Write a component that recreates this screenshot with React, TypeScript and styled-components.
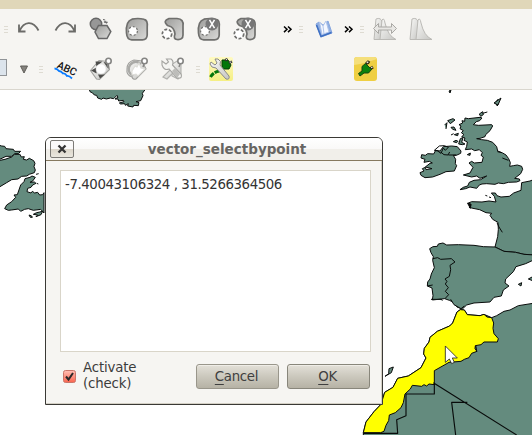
import React from "react";
import styled, { createGlobalStyle, css } from "styled-components";

const GlobalStyle = createGlobalStyle`
  html, body { margin: 0; padding: 0; overflow: hidden; }
  body { font-family: "DejaVu Sans", sans-serif; font-size: 13.33px; color: #3c3c3c; }
  *, *::before, *::after { box-sizing: border-box; }
`;

const Screen = styled.div`
  position: relative;
  display: flex;
  flex-direction: column;
  width: 532px;
  height: 435px;
  overflow: hidden;
  background: #fff;
`;

const TopStrip = styled.div`
  flex: none;
  height: 9px;
  background: #e0d7b9;
`;

const Toolbars = styled.header`
  flex: none;
  height: 81px;
  background: #f6f5f2;
  border-bottom: 1px solid #d9d6ce;
`;

const ToolRow = styled.div`
  display: flex;
  align-items: center;
  height: 40px;
`;

const Tool = styled.span<{ $gap?: number; $w?: number }>`
  flex: none;
  display: flex;
  width: ${(p) => p.$w ?? 24}px;
  height: 24px;
  margin-left: ${(p) => p.$gap ?? 12}px;
  svg { display: block; overflow: visible; }
`;

const Grip = styled.span<{ $gap: number }>`
  flex: none;
  width: 4px;
  height: 7px;
  margin-left: ${(p) => p.$gap}px;
  background: repeating-linear-gradient(#dedbd2 0 1px, transparent 1px 3px);
`;

const Combo = styled.span`
  flex: none;
  width: 7px;
  height: 17px;
  margin-top: -3px;
  background: #dce4ec;
  border: 1px solid #909498;
  border-width: 1px 1px 1px 0;
`;

const Canvas = styled.main`
  flex: 1;
  svg { display: block; }
`;

const Dialog = styled.section`
  position: absolute;
  left: 45px;
  top: 137px;
  display: flex;
  flex-direction: column;
  width: 338px;
  height: 268px;
  background: #f6f5f2;
  border: 1px solid #3a3935;
  border-radius: 6px 6px 0 0;
  box-shadow: inset -1px -1px #d4d0c5;
  overflow: hidden;
`;

const TitleBar = styled.div`
  flex: none;
  display: flex;
  align-items: center;
  height: 23px;
  padding-left: 4px;
  background: linear-gradient(#fff 0, #faf9f8 48%, #f1efea 52%, #f1efea 100%);
  border-bottom: 1px solid #86795f;
`;

const CloseButton = styled.button`
  display: grid;
  place-items: center;
  width: 24px;
  height: 18px;
  padding: 0;
  border: 1px solid #7d7b77;
  border-radius: 2px;
  background: linear-gradient(#fbfafa 0 50%, #dcd6ca 51%, #eae7df);
`;

const Title = styled.h1`
  flex: 1;
  margin: 0 0 0 2px;
  padding-right: 4px;
  text-align: center;
  font-size: 13.5px;
  line-height: 18px;
  color: #666562;
`;

const Readout = styled.div`
  flex: none;
  width: 311px;
  height: 182px;
  margin: 9px 0 0 14px;
  padding: 6px 4px;
  border: 1px solid #d9d5c9;
  background: #fff;
  line-height: 16px;
  letter-spacing: -0.42px;
  white-space: nowrap;
  color: #333;
`;

const Footer = styled.div`
  display: flex;
  align-items: center;
  height: 48px;
  padding-left: 17px;
`;

const CheckLabel = styled.label`
  display: flex;
  align-items: center;
  width: 133px;
  gap: 7px;
  line-height: 16px;
  letter-spacing: -0.15px;
`;

const CheckMark = styled.span`
  display: block;
  width: 13px;
  height: 13px;
  svg { display: block; overflow: visible; }
`;

const PushButton = styled.button<{ $focus?: boolean }>`
  width: 83px;
  height: 25px;
  padding: 0 2px 1px 0;
  margin: 1px 8px 0 0;
  border: 1px solid #99968b;
  border-radius: 3px;
  background: linear-gradient(#e3e0d8, #cbc8bd 50%, #b6b2a5);
  box-shadow: inset 0 1px #efede7;
  font: 13.33px "DejaVu Sans", sans-serif;
  letter-spacing: -0.3px;
  color: #3f3f3f;
  ${(p) => p.$focus && css`border-color: #88867b;`}
  u { text-underline-offset: 3px; text-decoration-thickness: 1px; }
`;

const Chevrons = () => (
  <svg width="10" height="24" fill="none" stroke="#000" strokeWidth="1.5">
    <path d="M1 9.5l3 2.8-3 2.8M5 9.5l3 2.8-3 2.8" />
  </svg>
);

const Arrow = ({ flip = false }: { flip?: boolean }) => (
  <svg width="24" height="24" fill="none" stroke="#6b6b68" strokeWidth="1.8">
    <path transform={flip ? "translate(24) scale(-1 1)" : undefined}
      d="M2 7.5v7h6.5M2.3 14.2C7 4 16 3 21.5 13.5" />
  </svg>
);

const Blob = ({ kind, cross = false }: { kind: "ring" | "part"; cross?: boolean }) => (
  <svg width="24" height="24" stroke="#6f6f6d" strokeWidth="1.7">
    {kind === "ring" ? (
      <>
        <path fill="url(#gray)" d="M7 2.2Q13 .8 19 2.3Q23 3 22.2 10V18Q22 23 17 22.8H7Q2 23 1.5 16Q.5 4 7 2.2Z" />
        <circle cx="8" cy="14" r="4.4" fill="#fff" strokeWidth="1.2" strokeDasharray="2 2" />
      </>
    ) : (
      <>
        <path fill="url(#gray)" d="M6 8Q1.5 4 8 1.5H16Q23 2 22 9V18Q22 23 16 22.5Q12 22 14 17Q13 10 8 9Q7 9 6 8Z" />
        <circle cx="6" cy="17" r="4.7" fill="#fff" strokeDasharray="3 1.7" />
      </>
    )}
    {cross && (
      <>
        <circle cx="15" cy="7" r="6.5" fill="#777" stroke="none" />
        <path d="M12.5 2.8l5 8.4M17.5 2.8l-5 8.4" stroke="#fff" strokeWidth="1.5" />
      </>
    )}
  </svg>
);

const Simplify = () => (
  <svg width="24" height="24" stroke="#666" strokeWidth="1.5">
    <circle cx="7" cy="7" r="5.7" fill="#979797" />
    <path fill="url(#gray)" d="M9.5 8.5h8.5l3.8 6-3.8 7H9.5L6 15z" />
    <path fill="none" strokeWidth="1.1" strokeDasharray="2 1" d="M14 2.5Q17 2.5 17 6M15 4.5l2 2 2-2" />
  </svg>
);

const Tag = ({ kind }: { kind: "move" | "turn" | "edit" }) => (
  <svg width="24" height="24" stroke="#858583" strokeWidth="1.1">
    {kind === "move" && (
      <>
        <path fill="url(#pale)" stroke="#a0a09d" d="M1.5 13.5L10 3.5l9 1 1.5 8-10 10-3-.5z" />
        <g fill="#4d4d4b" stroke="none">
          <path d="M6.5 4.5h7l-6 5zM14.5 5l5 1v6zM2 13.5l5.5-3v6zM9 17.5h7l-5 4z" />
        </g>
        <circle cx="12" cy="12" r="5" fill="#fff" stroke="#ddd" strokeWidth=".5" />
      </>
    )}
    {kind === "turn" && (
      <>
        <path fill="url(#pale)" stroke="#a0a09d" d="M2 12Q2 5 9 3l8 1 4 8-10 10Q8 23 7 20Q1 18 2 12z" />
        <path fill="none" strokeWidth="2.4" stroke="#aaaaa7" d="M8 19Q1 14 5 8Q10 2 16 7" />
        <path fill="#fff" stroke="#deded9" d="M7 14l3-5 2 1 2-4 2 5 4 1-7 7-2-2-4 1z" />
      </>
    )}
    {kind === "edit" && (
      <>
        <path fill="url(#pale)" stroke="#b2b2af" d="M10 8l6-4 4 1v13l-3 4-6-3z" />
        <path fill="url(#pale)" stroke="#b2b2af" d="M2 20l9-9 3 3-8 8z" />
        <path fill="#f4f4f1" stroke="#a4a4a1" d="M1 8V4l4 3 2.5-2-2-3H10q3 2 1.5 6L20 17q2 5-4 4L8 12q-5 2-7-4z" />
        <path fill="#bdbdba" stroke="none" d="M11 14l3-3 5 6-3 4z" />
      </>
    )}
    <circle cx="19.5" cy="4" r="2.7" fill="#fff" strokeWidth="1.6" />
    <path d="M19 7l-1 3" strokeWidth="1.4" />
  </svg>
);

const AbcText = styled.text`
  font: 500 10.5px Roboto, sans-serif;
  fill: #161616;
`;

const Abc = () => (
  <svg width="24" height="24">
    <AbcText transform="translate(2.2 10.5) rotate(25)">ABC</AbcText>
    <path d="M.5 11.5Q3 11.5 5 14Q7 14 9 16.5Q11 16 13 19Q15 18.5 18 21.5" fill="none" stroke="#087bff" strokeWidth="1.8" />
  </svg>
);

const PluginWrench = () => (
  <svg width="24" height="24">
    <rect width="24" height="24" rx="2" fill="url(#lemon)" />
    <path d="M1.5 20q3-5 9-6" fill="none" stroke="#04770a" strokeWidth="3" strokeDasharray="5 1" />
    <path d="M13 3h6l3 5-2 4h-7z" fill="#04770a" stroke="#073c08" />
    <path d="M16.5 4l1.5-2.5M20 6l3-1.5" stroke="#333" strokeWidth="2.4" />
    <path d="M17 3l.8-1M20.8 5.5l1.4-.7" stroke="#eee" />
    <path d="M1 7l1-2 4 3 2-2-2-4h3q4 2 2 6l9 11q1 4-3 3L7 11Q2 11 1 7z" fill="url(#pale)" stroke="#8b8b87" />
  </svg>
);

const PluginYellow = () => (
  <svg width="23" height="24">
    <rect width="23" height="24" rx="3" fill="#efcf43" />
    <path d="M0 8Q9 7 23 2V3Q23 0 20 0H3Q0 0 0 3Z" fill="#f5df7b" />
    <path d="M12 7l2-2 1.5 1M16 12l3-2" fill="none" stroke="#312c12" strokeWidth="2.8" />
    <path d="M4.5 16.5L8 14V9.5L11.5 6.5l6 6-3 3.5-4.5 0-4 3z" fill="#0b830d" stroke="#164611" />
    <path d="M12.8 5.8l1.5-1M17.2 10.8l1.2-.8" stroke="#f6f6ea" strokeWidth="1.3" />
  </svg>
);

const MapBook = () => (
  <svg width="18" height="24">
    <path d="M1 7l3-2 4 3 5-4 4 12-11 4z" fill="#8faee1" stroke="#86a6df" />
    <path d="M4.5 5l3.5 4 3-5 3 11-7 2.5z" fill="#f4f7ff" stroke="#b1c5eb" />
    <path d="M1.5 8L6 19.5l10.5-4" fill="none" stroke="#3f70c3" strokeWidth="1.6" />
    <path d="M8 9l1 8" stroke="#b1c5eb" />
  </svg>
);

const Histogram = ({ arrows = false }: { arrows?: boolean }) => (
  <svg width="24" height="24" fill="url(#pale)" stroke="#bbbab6">
    <path d="M1 22.5L3 2q5-2 6 3l1 17.5z" />
    <path d="M7 22.5L9 3q2-3 3 3Q15 19 23 22.5z" />
    {arrows && <path d="M.5 11.5l5-5v3.5h13V6.5l5 5-5 5v-3.5h-13v3.5z" fill="#e8e7e4" stroke="#aaa9a5" />}
  </svg>
);

const LAND = "#648b7e";

const WorldMap = () => (
  <svg width="532" height="345" viewBox="0 90 532 345" fill={LAND} stroke="#080b0a" strokeWidth="3" strokeLinejoin="round">
    <g transform="translate(0 80) scale(.33333)">
      <path d="M268 28l2 7 8 4 5 6 7 1 3 8 12 4 4-4 10 3 12-3 10 2 10-10 3 6-9 5 9 0 2 6 14-2 2 4-14 4 4 3 12-1 2 5 9-5-2 7 16 3 2-5 14 1 2-9-9-3 14-3 7-15-2-7 9-12z" />
      <path d="M-5 195L5 198 14 199 18 206 40 208 44 214 62 214 55 221 45 221 35 229 18 229-5 240Z" />
      <path d="M-5 242L15 238 35 231 43 223 60 223 64 231 73 230 70 238 80 240 88 235 101 242 105 250 102 260 106 270 103 278 88 283 80 288 65 289 54 297 35 299 20 308-5 323Z" />
      <path d="M14 386L20 375 35 365 47 352 42 345 52 344 62 315 72 305 75 296 90 292 96 288 106 292 98 303 90 307 103 306 108 310 98 315 93 322 83 325 81 335 93 339 97 334 104 339 113 337 119 345 128 344 132 338V399L122 388 100 391 85 386 74 388 62 394 55 387 35 390 25 391Z" />
      <path d="M87 405l8 3 2 4-6 0zM100 403q7-5 19-7l9-2-5 10-15 6 5-5zM108 283l8-2M110 310l5 2" />
    </g>
    <g transform="translate(400 100) scale(.33333)">
      <path d="M195 54L205 56 240 52 246 54 239 62 229 65 220 74 235 76 275 74 278 78 270 92 257 104 255 110 240 115 230 116 245 119 262 121 278 127 290 140 293 153 308 159 318 165 326 176 331 188 329 199 340 197 352 195 365 199 368 208 362 221 344 235 358 237 360 242 350 246 325 247 310 251 295 249 285 253 260 251 246 252 238 255 230 265 210 261 197 266 180 269 190 262 203 258 208 247 222 241 242 239 260 228 240 235 230 228 215 231 190 225 210 219 219 202 207 189 215 184 223 189 246 187 250 171 243 166 247 158 238 149 224 152 215 147 196 149 200 139 202 126 192 121 195 114 185 110 192 104 184 98 190 92 180 86 183 78 177 74 188 69 186 62 194 64Z" />
      <path d="M65 164L76 166 83 161 101 162 107 151 120 153 130 140 155 138 172 140 183 153 182 160 169 166 160 166 167 178 166 191 170 197 163 213 138 215 120 223 98 231 75 233 63 226 60 218 72 213 67 206 76 202 78 209 96 206 84 203 76 201 90 190 97 189 88 184 72 187 75 178 63 174Z" />
      <path d="M103 151l15-13 15-1 12 5-9 9-6-7-7 16-10-7zM122 156l10 8 12 1 5-9M145 165h24" fill="none" />
      <path d="M143 62l16-6 6 4-14 11zM134 75l7-7-3 19M153 82l9-1 6 10-10-3zM153 105l8-4M163 104l12-4-2 7zM160 125l8-4 6 3-4 4zM176 132l5-16 8-3-4 14 10 5-8 2zM202 164l9-5-1 7zM238 42l10-7 2 9-8 5zM286 8l8-10 3 5-5 15zM248 40l14-4M256 286l6 2M267 291l6 2" />
      <path d="M292 155l14 3M307 174l18 7" fill="none" />
    </g>
    <g transform="translate(400 200) scale(.33333)">
      <path d="M405-63L390-57 365-52 363-29 341-21 328-11 303-9 291-13 286-21 274-21 283-11 288 6 267 3 246 6 215 5 203 10 213 13 211 20 207 22 219 25 239 29 258 38 275 40 270 46 278 58 294 67 295 88 293 110 285 141 312 154 347 157 372 163 405 165Z" />
      <path d="M405 178L377 191 348 200 340 215 317 237 315 249 327 258 310 270 304 288 282 292 270 306 222 309 200 315 187 327 171 321 161 307 148 301 134 296 97 300 99 287 96 264 82 258 83 246 90 237 94 222 103 203 98 181 100 170 93 158 89 146 99 140 112 139 115 132 129 129 140 135 175 134 222 136 250 140 285 141 312 154 347 157 372 163 405 165Z" />
      <path d="M98 176L113 173 122 178 154 176 165 186 150 196 152 209 148 229 135 237 141 244 136 252 145 263 136 274 146 284 135 296M291 68l6 13 10 16M82 258l16-3" fill="none" />
      <path d="M385 237l15-8v14zM355 253l10-5-2 10z" />
      <path d="M203 10l10 3-2 12z" fill="#080b0a" />
    </g>
    <g transform="translate(350 300) scale(.33333)">
      <path d="M555 9L505 17 480 30 462 34 440 47 425 53 402 43 390 47 352 44 343 30 331 29 321 36 308 69 299 78 262 94 240 112 237 126 223 145 221 162 228 174 213 203 175 228 143 235 129 262 104 277 93 313 72 335 48 366 40 398V415H560Z" />
      <path fill="#ffff00" d="M331 29L343 30 352 44 390 47 402 43 411 51 425 53 431 69 429 85 432 101 445 116 442 126 402 126 393 134 376 137 375 146 381 154 365 160 357 173 343 178 333 184 297 187 285 194 253 212V254L237 252 230 258 222 254 215 259 187 256 181 267 165 282 160 308 153 323 136 338 118 345 116 362 108 376 102 394 92 398 40 398 48 366 72 335 93 313 104 277 129 262 143 235 175 228 213 203 228 174 221 162 223 145 237 126 240 112 262 94 299 78 308 69 321 36Z" />
      <path d="M250 248L500 405M253 250v32h-85v65l-28 12 3 41H40M352 307h-47l12 98M377 137l3 17" fill="none" strokeWidth="3.4" />
      <path d="M105 229l11-8 1-15 13-5-6 17zM243-2h30l5 3M302-2l10 16 21 12 10-8" />
      <path d="M286 138v49l12-10 7 14 8-4-6-13h15z" fill="#fff" stroke="#222" strokeWidth="2.5" />
    </g>
    <path d="M449 91l2-1-1 3zM494 103l7-5-3 7-2-1z" strokeWidth="1" />
  </svg>
);

const Defs = () => (
  <defs>
    <linearGradient id="gray" x2="1" y2="1"><stop stopColor="#9d9d9b" /><stop offset="1" stopColor="#dadad8" /></linearGradient>
    <linearGradient id="pale" x2="1" y2="1"><stop stopColor="#fafaf8" /><stop offset="1" stopColor="#c5c5c2" /></linearGradient>
    <linearGradient id="lemon" x2="0" y2="1"><stop stopColor="#fffac1" /><stop offset="1" stopColor="#f5ef84" /></linearGradient>
    <linearGradient id="red" x2="0" y2="1"><stop stopColor="#ffc0b5" /><stop offset="1" stopColor="#fa634d" /></linearGradient>
  </defs>
);

const DefsHolder = styled.svg`
  position: absolute;
  width: 0;
  height: 0;
`;

export default function App() {
  return (
    <Screen>
      <GlobalStyle />
      <DefsHolder><Defs /></DefsHolder>
      <TopStrip />
      <Toolbars>
        <ToolRow>
          <Grip $gap={4} />
          <Tool $gap={9}><Arrow /></Tool>
          <Tool><Arrow flip /></Tool>
          <Tool><Simplify /></Tool>
          <Tool><Blob kind="ring" /></Tool>
          <Tool><Blob kind="part" /></Tool>
          <Tool><Blob kind="ring" cross /></Tool>
          <Tool><Blob kind="part" cross /></Tool>
          <Tool $gap={26} $w={10}><Chevrons /></Tool>
          <Grip $gap={6} />
          <Tool $gap={12} $w={18}><MapBook /></Tool>
          <Tool $gap={11} $w={10}><Chevrons /></Tool>
          <Grip $gap={6} />
          <Tool $gap={9}><Histogram arrows /></Tool>
          <Tool><Histogram /></Tool>
        </ToolRow>
        <ToolRow>
          <Combo />
          <Tool $gap={13} $w={8}>
            <svg width="8" height="24"><path d="M.5 9h7l-3.5 7z" fill="#85837e" stroke="#5f5d59" /></svg>
          </Tool>
          <Grip $gap={11} />
          <Tool $gap={11}><Abc /></Tool>
          <Tool $gap={11}><Tag kind="move" /></Tool>
          <Tool><Tag kind="turn" /></Tool>
          <Tool><Tag kind="edit" /></Tool>
          <Grip $gap={11} />
          <Tool $gap={9}><PluginWrench /></Tool>
          <Tool $gap={121} $w={23}><PluginYellow /></Tool>
        </ToolRow>
      </Toolbars>
      <Canvas><WorldMap /></Canvas>
      <Dialog role="dialog">
        <TitleBar>
          <CloseButton aria-label="Close">
            <svg width="10" height="10" stroke="#353535" strokeWidth="2.3"><path d="M1.5 1.5l7 7M8.5 1.5l-7 7" /></svg>
          </CloseButton>
          <Title>vector_selectbypoint</Title>
        </TitleBar>
        <Readout>-7.40043106324 , 31.5266364506</Readout>
        <Footer>
          <CheckLabel>
            <CheckMark>
              <svg width="13" height="13">
                <rect x=".5" y=".5" width="12" height="12" rx="2" fill="url(#red)" stroke="#c9766a" />
                <path d="M3 6.5l2.5 3L10 3" fill="none" stroke="#292929" strokeWidth="2" />
              </svg>
            </CheckMark>
            <span>Activate<br />(check)</span>
          </CheckLabel>
          <PushButton><u>C</u>ancel</PushButton>
          <PushButton $focus><u>O</u>K</PushButton>
        </Footer>
      </Dialog>
    </Screen>
  );
}
